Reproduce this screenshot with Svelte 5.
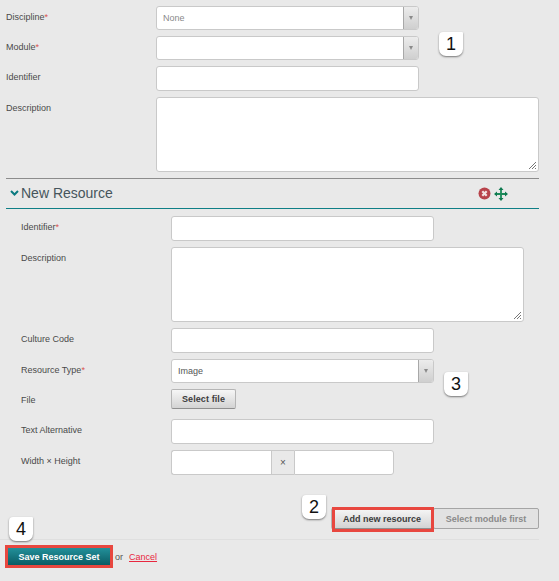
<script>
  const callouts = [
    { n: 1, cls: 'c1' },
    { n: 2, cls: 'c2' },
    { n: 3, cls: 'c3' },
    { n: 4, cls: 'c4' }
  ];
</script>

<div class="page">
  <section class="form outer">
    <div class="row h24">
      <span class="lbl">Discipline<em>*</em></span>
      <div class="select w263"><span class="val muted">None</span><span class="arrow"><i></i></span></div>
    </div>
    <div class="row h24">
      <span class="lbl">Module<em>*</em></span>
      <div class="select w263"><span class="val"></span><span class="arrow"><i></i></span></div>
    </div>
    <div class="row h25">
      <span class="lbl">Identifier</span>
      <div class="input w263"></div>
    </div>
    <div class="row h75">
      <span class="lbl">Description</span>
      <div class="input w383 area">
        <svg class="grip" width="9" height="9" viewBox="0 0 9 9"><path d="M1 8 8 1M4 8 8 4M7 8 8 7" stroke="#777" stroke-width="1" fill="none"/></svg>
      </div>
    </div>
  </section>

  <header class="head">
    <div class="title">
      <svg class="chev" width="9" height="6" viewBox="0 0 9 6"><path d="M1 1l3.500 3.500L8 1" fill="none" stroke="#0b7a80" stroke-width="2"/></svg>
      <h2>New Resource</h2>
    </div>
    <div class="tools">
      <svg width="13" height="13" viewBox="0 0 13 13"><circle cx="6.500" cy="6.500" r="6" fill="#b8434b"/><path d="M4.300 4.300l4.400 4.400M8.700 4.300 4.300 8.700" stroke="#f3e3e3" stroke-width="2.200"/></svg>
      <svg width="14" height="14" viewBox="0 0 14 14"><path d="M7 1v12M1 7h12" stroke="#1c8a5a" stroke-width="1.800"/><path d="M7 0l2.500 3h-5zM7 14l2.500-3h-5zM0 7l3-2.500v5zM14 7l-3-2.500v5z" fill="#0f7a50"/></svg>
    </div>
  </header>

  <section class="form inner">
    <div class="row h25">
      <span class="lbl">Identifier<em>*</em></span>
      <div class="input w263"></div>
    </div>
    <div class="row h75">
      <span class="lbl">Description</span>
      <div class="input w353 area">
        <svg class="grip" width="9" height="9" viewBox="0 0 9 9"><path d="M1 8 8 1M4 8 8 4M7 8 8 7" stroke="#777" stroke-width="1" fill="none"/></svg>
      </div>
    </div>
    <div class="row h25">
      <span class="lbl">Culture Code</span>
      <div class="input w263"></div>
    </div>
    <div class="row h24">
      <span class="lbl">Resource Type<em>*</em></span>
      <div class="select w263"><span class="val">Image</span><span class="arrow"><i></i></span></div>
    </div>
    <div class="row h20">
      <span class="lbl">File</span>
      <button class="btn file">Select file</button>
    </div>
    <div class="row h25 gap10">
      <span class="lbl">Text Alternative</span>
      <div class="input w263"></div>
    </div>
    <div class="row h25">
      <span class="lbl">Width × Height</span>
      <div class="dims">
        <div class="input dim left"></div>
        <span class="times">×</span>
        <div class="input dim right"></div>
      </div>
    </div>
  </section>

  <div class="actions">
    <button class="btn add">Add new resource</button>
    <button class="btn first">Select module first</button>
  </div>

  <footer class="foot">
    <button class="save">Save Resource Set</button>
    <span class="or">or</span>
    <a href="#cancel">Cancel</a>
  </footer>

  {#each callouts as c}
    <span class="callout {c.cls}">{c.n}</span>
  {/each}
</div>

<style>
  :global(body) {
    margin: 0;
    background: #e9e9e9;
  }
  .page {
    position: relative;
    width: 559px;
    height: 581px;
    overflow: hidden;
    font-family: "Liberation Sans", Arial, sans-serif;
    font-size: 9px;
    color: #4a4a4a;
  }
  .form {
    display: flex;
    flex-direction: column;
    gap: 6px;
  }
  .outer {
    padding: 6px 0 0 6px;
  }
  .inner {
    padding: 7px 0 0 21px;
  }
  .row {
    display: grid;
    grid-template-columns: 150px auto;
    justify-content: start;
    align-items: start;
  }
  .gap10 {
    margin-top: 4px;
  }
  .h20 { height: 20px; }
  .h24 { height: 24px; }
  .h25 { height: 25px; }
  .h75 { height: 75px; }
  .lbl {
    padding-top: 6px;
    line-height: 10px;
  }
  em {
    color: #d9534f;
    font-style: normal;
  }
  .input, .select {
    box-sizing: border-box;
    background: #fff;
    border: 1px solid #c9c9c9;
    border-radius: 3px;
  }
  .w263 { width: 263px; height: 100%; }
  .w353 { width: 353px; height: 100%; }
  .w383 { width: 383px; height: 100%; }
  .area { position: relative; }
  .grip {
    position: absolute;
    right: 1px;
    bottom: 1px;
  }
  .select {
    display: flex;
    align-items: stretch;
    justify-content: space-between;
  }
  .val {
    padding: 6px 0 0 6px;
    line-height: 10px;
    color: #555;
  }
  .val.muted { color: #8a8a8a; }
  .arrow {
    box-sizing: border-box;
    width: 15px;
    display: flex;
    align-items: center;
    justify-content: center;
    border-left: 1px solid #a8a8a8;
    background: linear-gradient(#ececec, #cfcfcf);
    border-radius: 0 2px 2px 0;
  }
  .arrow i {
    width: 0;
    height: 0;
    border: 2.500px solid transparent;
    border-top: 4px solid #8a8a8a;
    border-bottom: 0;
  }
  .head {
    box-sizing: border-box;
    width: 533px;
    height: 31px;
    margin: 6px 0 0 6px;
    border-top: 1px solid #8c8c8c;
    border-bottom: 1px solid #0f7f86;
    display: flex;
    align-items: center;
    justify-content: space-between;
    padding: 0 31px 2px 4px;
  }
  .title {
    display: flex;
    align-items: center;
    gap: 2px;
  }
  .chev { margin-top: 1px; }
  h2 {
    margin: 0;
    font-size: 14px;
    font-weight: 400;
    color: #46555c;
    line-height: 18px;
  }
  .tools {
    display: flex;
    align-items: center;
    gap: 3px;
    margin-top: 2px;
  }
  .btn {
    box-sizing: border-box;
    padding: 0;
    font: 700 9px "Liberation Sans", Arial, sans-serif;
    color: #3c3c3c;
    border: 1px solid #b5b5b5;
    border-bottom-color: #8f8f8f;
    border-radius: 2px;
    background: linear-gradient(#f6f6f6, #d3d3d3);
  }
  .file {
    width: 65px;
    height: 20px;
    letter-spacing: 0.1px;
  }
  .dims {
    display: flex;
    height: 100%;
  }
  .dim {
    height: 100%;
  }
  .left {
    width: 100px;
    border-radius: 3px 0 0 3px;
    border-right: 0;
  }
  .right {
    width: 100px;
    border-radius: 0 3px 3px 0;
  }
  .times {
    box-sizing: border-box;
    width: 23px;
    display: flex;
    align-items: center;
    justify-content: center;
    background: #e9e9e9;
    border: 1px solid #c9c9c9;
    border-right: 0;
    color: #555;
    font-size: 10px;
  }
  .actions {
    display: flex;
    justify-content: flex-end;
    width: 539px;
    margin-top: 33px;
  }
  .actions .btn {
    height: 21px;
  }
  .add {
    width: 102px;
    position: relative;
  }
  .add::after {
    content: "";
    position: absolute;
    left: 0;
    top: -2px;
    right: -2px;
    bottom: -4px;
    border: 3px solid #e8473f;
  }
  .first {
    width: 106px;
    color: #8a8a8a;
    background: #e2e2e2;
    border-color: #a5a5a5;
  }
  .foot {
    box-sizing: border-box;
    width: 539px;
    margin: 10px 0 0 0;
    padding: 8px 0 0 8px;
    border-top: 1px solid #dfdfdf;
    display: flex;
    align-items: center;
  }
  .save {
    width: 102px;
    height: 17px;
    padding: 0;
    border: 0;
    color: #fff;
    font: 700 9px "Liberation Sans", Arial, sans-serif;
    background: linear-gradient(#22909a, #0b5c64);
    box-shadow: 0 0 0 3px #e8473f;
  }
  .or {
    margin-left: 5px;
    color: #555;
  }
  a {
    margin-left: 6px;
    color: #e8273f;
    text-decoration: underline;
  }
  .callout {
    position: absolute;
    box-sizing: border-box;
    width: 24px;
    height: 24px;
    display: flex;
    align-items: center;
    justify-content: center;
    background: #fff;
    border-radius: 4px 1px 7px 7px;
    box-shadow: 0 1px 2px #777;
    font-size: 18px;
    color: #111;
  }
  .c1 { left: 439px; top: 32px; }
  .c2 { left: 302px; top: 495px; }
  .c3 { left: 444px; top: 372px; }
  .c4 { left: 9px; top: 517px; }
</style>
